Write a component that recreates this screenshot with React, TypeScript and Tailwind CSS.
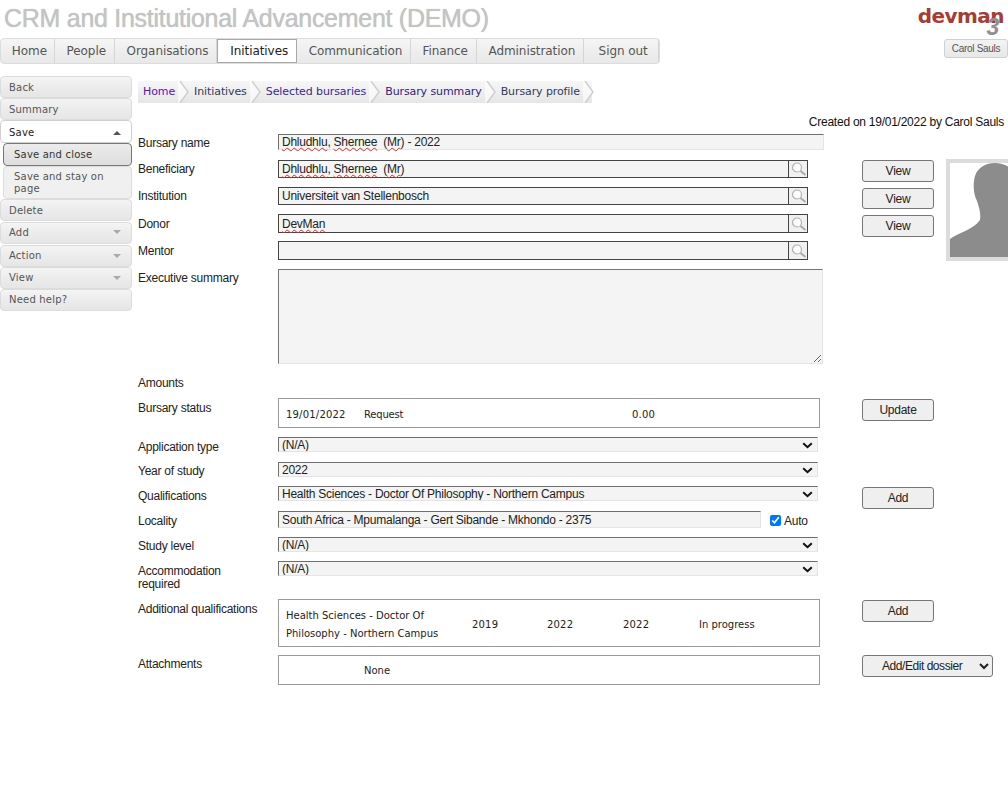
const NAV = [
  { label: "Home", w: "w-[54px]" },
  { label: "People", w: "w-[60px]" },
  { label: "Organisations", w: "w-[103px]" },
  { label: "Initiatives", w: "w-[80px]", active: true },
  { label: "Communication", w: "w-[114px]" },
  { label: "Finance", w: "w-[66px]" },
  { label: "Administration", w: "w-[108px]" },
  { label: "Sign out", w: "w-[75px]" },
];

const CRUMBS = [
  { label: "Home", color: "text-[#5b10b5]" },
  { label: "Initiatives", color: "text-[#333a5c]" },
  { label: "Selected bursaries", color: "text-[#3a2a8c]" },
  { label: "Bursary summary", color: "text-[#33207f]" },
  { label: "Bursary profile", color: "text-[#333a5c]" },
];

const Squiggle = ({ children }: { children: React.ReactNode }) => (
  <span className="underline decoration-wavy decoration-[#e02b25] decoration-1 underline-offset-1">{children}</span>
);

const SideItem = ({ label, arrow, className = "h-[22px] mb-px" }: { label: string; arrow?: boolean; className?: string }) => (
  <div className={`flex items-center justify-between pl-[8px] pr-[10px] rounded-[4px] border border-[#dcdcdc] bg-gradient-to-b from-[#f4f4f4] via-[#ececec] to-[#e6e6e6] text-[#555] ${className}`}>
    <span>{label}</span>
    {arrow && <span className="w-0 h-0 border-x-[4px] border-x-transparent border-t-[4px] border-t-[#aaa]" />}
  </div>
);

const Sidebar = () => (
  <aside className="w-[132px] shrink-0 pt-[12px] text-[10px] tracking-[0.2px] font-['DejaVu_Sans',sans-serif]">
    <SideItem label="Back" className="h-[22px]" />
    <SideItem label="Summary" className="h-[22px]" />
    <div className="h-[23px] flex items-center justify-between pl-[8px] pr-[10px] pt-[2px] rounded-[4px] border border-[#cfcfcf] bg-white text-[#222]">
      <span>Save</span>
      <span className="w-0 h-0 border-x-[4px] border-x-transparent border-b-[4px] border-b-[#555]" />
    </div>
    <div className="ml-[3px]">
      <div className="h-[23px] flex items-center pl-[10px] rounded-[4px] border border-[#777] bg-gradient-to-b from-[#ececec] to-[#dedede] text-[#333]">Save and close</div>
      <div className="h-[33px] pl-[10px] pt-[4px] pr-2 leading-[12px] rounded-[4px] border border-[#dcdcdc] bg-[#f0f0f0] text-[#555]">Save and stay on page</div>
    </div>
    <SideItem label="Delete" className="h-[22px] mb-[1px]" />
    <SideItem label="Add" arrow className="h-[22px] mb-[1px] pb-[2px]" />
    <SideItem label="Action" arrow className="h-[22px] pb-[1px]" />
    <SideItem label="View" arrow className="h-[22px] pb-[1px]" />
    <SideItem label="Need help?" className="h-[22px] pb-[1px]" />
  </aside>
);

const Breadcrumb = () => (
  <div className="flex items-stretch h-[22px] w-[454px] mt-[17px] pl-[5px] bg-gradient-to-b from-[#f7f7f7] to-[#e6e6e6] text-[11px] tracking-[-0.1px] font-['DejaVu_Sans',sans-serif]">
    {CRUMBS.map((c) => (
      <div key={c.label} className="flex items-center">
        <span className={`${c.color} whitespace-nowrap`}>{c.label}</span>
        <svg width="19" height="22" viewBox="0 0 19 22" className="shrink-0" aria-hidden>
          <path d="M3 0h2l8 11-8 11H3z" fill="#fff" opacity="0.6" />
          <path d="M5 0l8 11-8 11" fill="none" stroke="#cfcfcf" strokeWidth="1.5" />
        </svg>
      </div>
    ))}
  </div>
);

const inputCls =
  "bg-[#f4f4f4] border border-t-[#6e6e6e] border-l-[#6e6e6e] border-r-[#e4e4e4] border-b-[#e4e4e4] pl-[3px] whitespace-pre flex items-center";

const LookupField = ({ value, h }: { value?: React.ReactNode; h: string }) => (
  <div className="flex w-[530px]">
    <div className={`flex-1 bg-[#f4f4f4] border border-[#444] border-r-0 pl-[3px] flex items-center whitespace-pre ${h}`}>{value}</div>
    <div className={`w-[20px] bg-[#f0f0f0] border border-[#444] flex items-center pl-[2px] ${h}`}>
      <svg width="16" height="14" viewBox="0 0 16 14" aria-hidden>
        <circle cx="6" cy="5.5" r="4.5" fill="#fdfdfd" stroke="#b0b0b0" strokeWidth="1.2" />
        <path d="M9.5 9l5 4" stroke="#a8a8a8" strokeWidth="1.8" />
      </svg>
    </div>
  </div>
);

const Label = ({ children, className = "" }: { children: React.ReactNode; className?: string }) => (
  <div className={`w-[140px] shrink-0 leading-[13px] text-[#222] ${className}`}>{children}</div>
);

const Btn = ({ label, className = "" }: { label: string; className?: string }) => (
  <button className={`w-[72px] h-[22px] rounded-[3px] border border-[#767676] bg-[#efefef] text-[12px] text-[#222] ${className}`}>{label}</button>
);

const Select = ({ value }: { value: string }) => (
  <div className="flex items-start justify-between w-[540px] h-[15px] pl-[3px] pt-[1px] pr-[4px] overflow-hidden bg-[#f4f4f4] border border-t-[#6e6e6e] border-l-[#6e6e6e] border-r-[#e4e4e4] border-b-[#e4e4e4] leading-[13px] text-[#222]">
    <span>{value}</span>
    <svg width="11" height="7" viewBox="0 0 11 7" className="mt-[3px]" aria-hidden>
      <path d="M1.2 1.2l4.3 4 4.3-4" fill="none" stroke="#111" strokeWidth="2" />
    </svg>
  </div>
);

const Box = ({ className, children }: { className: string; children?: React.ReactNode }) => (
  <div className={`w-[542px] border border-[#9a9a9a] text-[10px] tracking-normal text-[#222] font-['DejaVu_Sans',sans-serif] relative ${className}`}>{children}</div>
);

const Avatar = () => (
  <div className="w-[90px] h-[102px] -mt-[1px] border-[4px] border-[#dcdcdc] bg-white overflow-hidden shrink-0">
    <svg width="86" height="94" viewBox="0 0 86 94" aria-hidden>
      <path
        d="M0 94V76C8 70 24 66 30 57C31 50 29 44 27 38C23 30 23 20 25 13C28 4 36 0 45 0C54 0 62 4 65 13V94Z"
        fill="#8c8c8c"
      />
    </svg>
  </div>
);

export default function App() {
  return (
    <div className="w-[1008px] h-[810px] overflow-hidden bg-white font-['Liberation_Sans',sans-serif] text-[12px] tracking-[-0.25px] text-[#222]">
      <header className="flex justify-between h-[64px]">
        <div>
          <h1 className="pl-[4px] pt-[2px] h-[38px] text-[25px] leading-[32px] text-[#c4c4c4] tracking-[-0.28px] [text-shadow:0_0_1px_#bdbdbd]">
            CRM and Institutional Advancement (DEMO)
          </h1>
          <nav className="flex h-[26px] w-[660px] rounded-[4px] border border-[#dcdcdc] bg-gradient-to-b from-[#f5f5f5] to-[#e8e8e8] text-[12px] tracking-[-0.08px] font-['DejaVu_Sans',sans-serif]">
            {NAV.map((n) => (
              <div
                key={n.label}
                className={`${n.w} flex items-center justify-center pl-1 border-r ${
                  n.active ? "bg-white border-l border-[#a8a8a8] border-y text-[#222]" : "border-[#d6d6d6] text-[#555]"
                }`}
              >
                {n.label}
              </div>
            ))}
          </nav>
        </div>
        <div className="w-[64px] flex flex-col items-end relative">
          <span className="absolute right-[4px] top-[1px] text-[20px] leading-[30px] font-bold text-[#a63c34] tracking-[-0.55px] font-['DejaVu_Sans',sans-serif] whitespace-nowrap">
            devman
          </span>
          <span className="absolute right-[9px] top-[15px] text-[23px] leading-[24px] font-bold italic text-[#8f8f8f] whitespace-nowrap">3</span>
          <button className="absolute right-0 top-[39px] w-[64px] h-[19px] rounded-[3px] border border-[#d0d0d0] bg-gradient-to-b from-[#f3f3f3] to-[#e8e8e8] text-[10px] tracking-[-0.3px] text-[#555] whitespace-nowrap">
            Carol Sauls
          </button>
        </div>
      </header>

      <div className="flex">
        <Sidebar />
        <main className="flex-1 pl-[6px] min-w-0">
          <Breadcrumb />
          <div className="text-right pr-[4px] h-[14px] mt-[12px] leading-[14px] text-[#111]">Created on 19/01/2022 by Carol Sauls</div>

          <div className="flex h-[107px] mt-[5px]">
            <div className="w-[724px] shrink-0">
              <div className="flex h-[26px]">
                <Label className="pt-[3px]">Bursary name</Label>
                <div className={`${inputCls} w-[546px] h-[16px]`}>
                  <Squiggle>Dhludhlu</Squiggle>, <Squiggle>Shernee</Squiggle>  (<Squiggle>Mr</Squiggle>) - 2022
                </div>
              </div>
              <div className="flex h-[27px]">
                <Label className="pt-[3px]">Beneficiary</Label>
                <LookupField h="h-[18px]" value={<><Squiggle>Dhludhlu</Squiggle>, <Squiggle>Shernee</Squiggle>  (<Squiggle>Mr</Squiggle>)</>} />
              </div>
              <div className="flex h-[27px]">
                <Label className="pt-[3px]">Institution</Label>
                <LookupField h="h-[18px]" value="Universiteit van Stellenbosch" />
              </div>
              <div className="flex h-[27px]">
                <Label className="pt-[4px]">Donor</Label>
                <LookupField h="h-[19px]" value={<Squiggle>DevMan</Squiggle>} />
              </div>
            </div>
            <div className="w-[84px] shrink-0 flex flex-col mt-[26px]">
              <Btn label="View" />
              <Btn label="View" className="mt-[6px] !h-[21px]" />
              <Btn label="View" className="mt-[6px]" />
            </div>
            <div className="mt-[26px]">
              <Avatar />
            </div>
          </div>

          <div className="flex h-[28px]">
            <Label className="pt-[4px]">Mentor</Label>
            <LookupField h="h-[19px]" />
          </div>

          <div className="flex h-[107px]">
            <Label className="pt-[3px]">Executive summary</Label>
            <textarea readOnly className="block w-[545px] h-[95px] bg-[#f4f4f4] border border-[#767676] border-r-[#e4e4e4] border-b-[#e4e4e4] outline-none resize-y" />
          </div>

          <Label className="h-[22px] pt-[1px]">Amounts</Label>

          <div className="flex h-[39px]">
            <Label className="pt-[4px]">Bursary status</Label>
            <Box className="h-[30px]">
              <span className="absolute left-[7px] top-[8px] tracking-[0.2px]">19/01/2022</span>
              <span className="absolute left-[85px] top-[8px] tracking-[-0.2px]">Request</span>
              <span className="absolute left-[353px] top-[8px] tracking-[0.2px]">0.00</span>
            </Box>
            <Btn label="Update" className="ml-[42px] mt-[1px]" />
          </div>

          <div className="flex h-[25px]">
            <Label className="pt-[4px]">Application type</Label>
            <Select value="(N/A)" />
          </div>
          <div className="flex h-[24px]">
            <Label className="pt-[3px]">Year of study</Label>
            <Select value="2022" />
          </div>
          <div className="flex h-[25px]">
            <Label className="pt-[4px]">Qualifications</Label>
            <Select value="Health Sciences - Doctor Of Philosophy - Northern Campus" />
            <Btn label="Add" className="ml-[44px] mt-[1px]" />
          </div>
          <div className="flex h-[26px]">
            <Label className="pt-[4px]">Locality</Label>
            <div className={`${inputCls} w-[483px] h-[17px]`}>South Africa - Mpumalanga - Gert Sibande - Mkhondo - 2375</div>
            <label className="flex items-center ml-[9px] h-[17px] mt-px">
              <input type="checkbox" defaultChecked className="w-[11px] h-[11px] mr-[3px] accent-[#0075ff]" />
              <span>Auto</span>
            </label>
          </div>
          <div className="flex h-[24px]">
            <Label className="pt-[3px]">Study level</Label>
            <Select value="(N/A)" />
          </div>
          <div className="flex h-[38px]">
            <Label className="pt-[4px]">Accommodation<br />required</Label>
            <Select value="(N/A)" />
          </div>

          <div className="flex h-[56px]">
            <Label className="pt-[4px]">Additional qualifications</Label>
            <Box className="h-[48px]">
              <span className="absolute left-[7px] top-[7px] w-[170px] leading-[18px]">Health Sciences - Doctor Of Philosophy - Northern Campus</span>
              <span className="absolute left-[193px] top-[17px] tracking-[0.2px]">2019</span>
              <span className="absolute left-[268px] top-[17px] tracking-[0.2px]">2022</span>
              <span className="absolute left-[344px] top-[17px] tracking-[0.2px]">2022</span>
              <span className="absolute left-[420px] top-[17px]">In progress</span>
            </Box>
            <Btn label="Add" className="ml-[42px] mt-[1px]" />
          </div>

          <div className="flex">
            <Label className="pt-[3px]">Attachments</Label>
            <Box className="h-[30px]">
              <span className="absolute left-[85px] top-[7px]">None</span>
            </Box>
            <select
              defaultValue="Add/Edit dossier"
              className="ml-[42px] w-[131px] h-[22px] pl-[15px] rounded-[3px] border border-[#767676] bg-[#efefef] text-[12px] tracking-[-0.45px] text-[#222] appearance-auto outline-none"
            >
              <option>Add/Edit dossier</option>
            </select>
          </div>
        </main>
      </div>
    </div>
  );
}
